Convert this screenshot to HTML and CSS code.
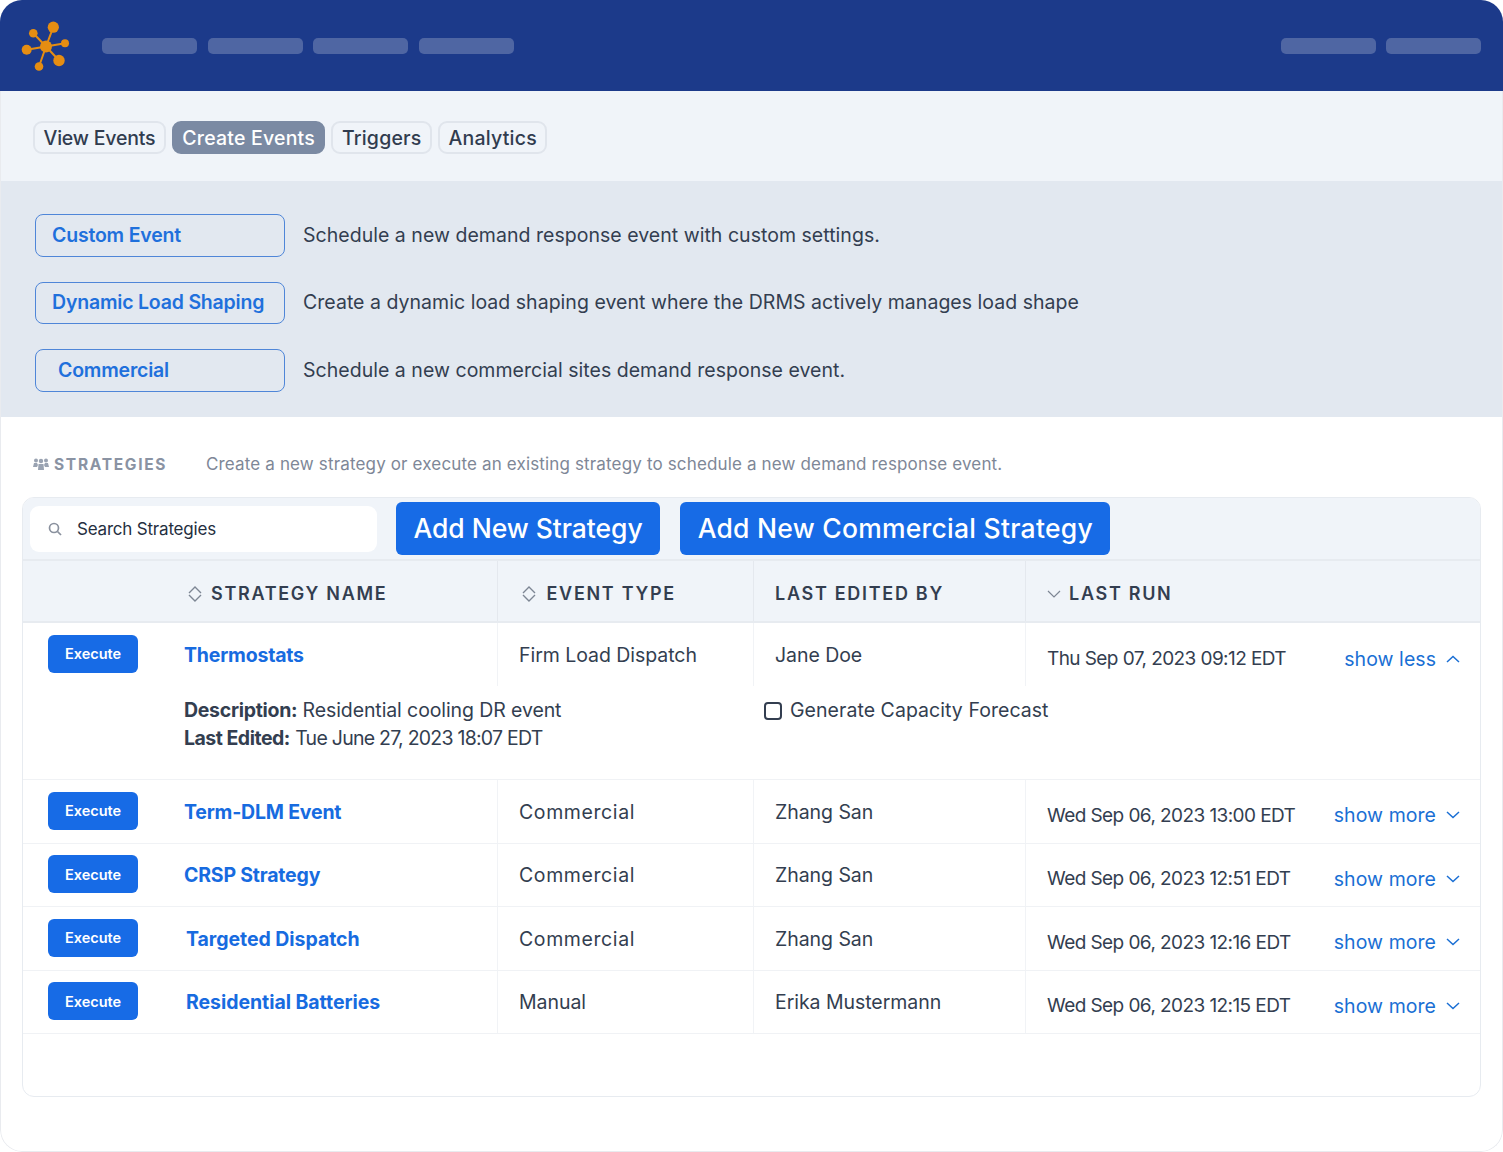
FILE: index.html
```html
<!DOCTYPE html>
<html lang="en">
<head>
<meta charset="utf-8">
<title>Create Events</title>
<link rel="stylesheet" href="styles.css">
</head>
<body>
<div class="app">
  <header class="topbar">
    <svg class="logo" width="50" height="50" viewBox="0 0 50 50" aria-hidden="true">
      <g fill="#e58d12">
        <path d="M25 25.500L32.300 6.200M25 25.500L12.300 12.200M25 25.500L44 22.200M25 25.500L38 39.500M25 25.500L18 45.500M25 25.500L5.700 28.800" fill="none" stroke="#e58d12" stroke-width="2"/>
        <circle cx="25" cy="25.500" r="6"/>
        <circle cx="32.300" cy="6.200" r="5.600"/>
        <circle cx="12.300" cy="12.200" r="4.300"/>
        <circle cx="44" cy="22.200" r="4"/>
        <circle cx="38" cy="39.500" r="5.700"/>
        <circle cx="18" cy="45.500" r="4.300"/>
        <circle cx="5.700" cy="28.800" r="5"/>
      </g>
    </svg>
    <div class="pills">
      <span class="pill"></span><span class="pill"></span><span class="pill"></span><span class="pill"></span>
    </div>
    <div class="pills pills-right">
      <span class="pill"></span><span class="pill"></span>
    </div>
  </header>

  <nav class="tabs">
    <a class="tab tab-tight">View Events</a>
    <a class="tab tab-active">Create Events</a>
    <a class="tab">Triggers</a>
    <a class="tab">Analytics</a>
  </nav>

  <section class="create">
    <div class="create-row"><button class="outline">Custom Event</button><p>Schedule a new demand response event with custom settings.</p></div>
    <div class="create-row"><button class="outline">Dynamic Load Shaping</button><p>Create a dynamic load shaping event where the DRMS actively manages load shape</p></div>
    <div class="create-row"><button class="outline outline-inset">Commercial</button><p>Schedule a new commercial sites demand response event.</p></div>
  </section>

  <section class="strategies">
    <div class="intro">
      <svg class="intro-icon" width="16" height="12" viewBox="0 0 16 12" aria-hidden="true"><g fill="#9aa3b2"><circle cx="3" cy="2.500" r="2"/><circle cx="13" cy="2.500" r="2"/><circle cx="8" cy="3" r="2.200"/><path d="M0 9l1-4h3l1 2-1 2zM16 9l-1-4h-3l-1 2 1 2zM5 12l.5-6h5l.5 6z"/></g></svg>
      <span class="intro-title">STRATEGIES</span>
      <span class="intro-text">Create a new strategy or execute an existing strategy to schedule a new demand response event.</span>
    </div>

    <div class="card">
      <div class="toolbar">
        <label class="search">
          <svg width="14" height="14" viewBox="0 0 14 14" fill="none" stroke="#8a919e" stroke-width="1.700" aria-hidden="true"><circle cx="6" cy="6" r="4.500"/><path d="M9.500 9.500L13 13"/></svg>
          <span>Search Strategies</span>
        </label>
        <button class="primary">Add New Strategy</button>
        <button class="primary primary-wide">Add New Commercial Strategy</button>
      </div>

      <div class="grid head">
        <div class="cell cell-name"><svg class="sort" width="16" height="18" viewBox="0 0 16 18" fill="none" stroke="#7d8694" stroke-width="1.400" aria-hidden="true"><path d="M2 8l6-6 6 6M2 10l6 6 6-6"/></svg>STRATEGY NAME</div>
        <div class="cell"><svg class="sort sort-wide" width="16" height="18" viewBox="0 0 16 18" fill="none" stroke="#7d8694" stroke-width="1.400" aria-hidden="true"><path d="M2 8l6-6 6 6M2 10l6 6 6-6"/></svg>EVENT TYPE</div>
        <div class="cell cell-plain">LAST EDITED BY</div>
        <div class="cell"><svg class="sort sort-narrow" width="14" height="10" viewBox="0 0 14 10" fill="none" stroke="#7d8694" stroke-width="1.200" aria-hidden="true"><path d="M1 2l6 6 6-6"/></svg>LAST RUN</div>
      </div>

      <div class="row row-open">
        <div class="grid body">
          <div class="cell cell-name"><button class="execute">Execute</button><a class="name">Thermostats</a></div>
          <div class="cell">Firm Load Dispatch</div>
          <div class="cell">Jane Doe</div>
          <div class="cell cell-run"><span class="run">Thu Sep 07, 2023 09:12 EDT</span><a class="toggle">show less<svg width="14" height="8" viewBox="0 0 14 8" fill="none" stroke="#1a6fd4" stroke-width="1.500" aria-hidden="true"><path d="M1 7L7 1.500 13 7"/></svg></a></div>
        </div>
        <div class="details">
          <div class="details-text"><b>Description:</b> Residential cooling DR event<br><b class="tight">Last Edited:</b> <span class="details-date">Tue June 27, 2023 18:07 EDT</span></div>
          <label class="check"><span class="box"></span>Generate Capacity Forecast</label>
        </div>
      </div>

      <div class="row">
        <div class="grid body">
          <div class="cell cell-name"><button class="execute">Execute</button><a class="name">Term-DLM Event</a></div>
          <div class="cell cell-wide">Commercial</div>
          <div class="cell">Zhang San</div>
          <div class="cell cell-run"><span class="run">Wed Sep 06, 2023 13:00 EDT</span><a class="toggle">show more<svg width="14" height="8" viewBox="0 0 14 8" fill="none" stroke="#1a6fd4" stroke-width="1.500" aria-hidden="true"><path d="M1 1L7 6.500 13 1"/></svg></a></div>
        </div>
      </div>
      <div class="row">
        <div class="grid body">
          <div class="cell cell-name"><button class="execute">Execute</button><a class="name">CRSP Strategy</a></div>
          <div class="cell cell-wide">Commercial</div>
          <div class="cell">Zhang San</div>
          <div class="cell cell-run"><span class="run">Wed Sep 06, 2023 12:51 EDT</span><a class="toggle">show more<svg width="14" height="8" viewBox="0 0 14 8" fill="none" stroke="#1a6fd4" stroke-width="1.500" aria-hidden="true"><path d="M1 1L7 6.500 13 1"/></svg></a></div>
        </div>
      </div>
      <div class="row">
        <div class="grid body">
          <div class="cell cell-name"><button class="execute">Execute</button><a class="name name-inset">Targeted Dispatch</a></div>
          <div class="cell cell-wide">Commercial</div>
          <div class="cell">Zhang San</div>
          <div class="cell cell-run"><span class="run">Wed Sep 06, 2023 12:16 EDT</span><a class="toggle">show more<svg width="14" height="8" viewBox="0 0 14 8" fill="none" stroke="#1a6fd4" stroke-width="1.500" aria-hidden="true"><path d="M1 1L7 6.500 13 1"/></svg></a></div>
        </div>
      </div>
      <div class="row">
        <div class="grid body">
          <div class="cell cell-name"><button class="execute">Execute</button><a class="name name-inset">Residential Batteries</a></div>
          <div class="cell">Manual</div>
          <div class="cell">Erika Mustermann</div>
          <div class="cell cell-run"><span class="run">Wed Sep 06, 2023 12:15 EDT</span><a class="toggle">show more<svg width="14" height="8" viewBox="0 0 14 8" fill="none" stroke="#1a6fd4" stroke-width="1.500" aria-hidden="true"><path d="M1 1L7 6.500 13 1"/></svg></a></div>
        </div>
      </div>
    </div>
  </section>
</div>
</body>
</html>
```
FILE: styles.css
```css
* { box-sizing: border-box; }
html, body { margin: 0; background: #fff; }
body { font-family: Inter, "Noto Sans", sans-serif; color: #2f3a4c; }
p { margin: 0; }
button { font-family: inherit; cursor: pointer; }

.app {
  position: relative;
  width: 1503px;
  height: 1152px;
  border-radius: 22px;
  overflow: hidden;
  background: #fff;
}
.app::after {
  content: "";
  position: absolute;
  inset: 91px 0 0;
  border: 1px solid #e9ebef;
  border-top: 0;
  border-radius: 0 0 22px 22px;
  pointer-events: none;
}

.topbar {
  height: 91px;
  background: #1c3a8a;
  display: flex;
  align-items: center;
  padding: 0 22px 0 21px;
}
.logo { margin-right: 31px; flex: none; }
.pills { display: flex; gap: 10.500px; }
.pills-right { margin-left: auto; }
.pill { width: 95px; height: 16px; border-radius: 5px; background: #4f66a3; }

.tabs {
  height: 90px;
  background: #f0f4f9;
  display: flex;
  align-items: center;
  gap: 6px;
  padding: 3px 33px 0;
}
.tab {
  height: 33px;
  padding: 0 8.500px;
  display: flex;
  align-items: center;
  border: 2px solid #e0e5ec;
  border-radius: 9px;
  font-size: 19.500px;
  font-weight: 500;
  letter-spacing: 0.2px;
  color: #303c4f;
}
.tab-tight { letter-spacing: -0.2px; }
.tab-active { background: #7b8aa3; border-color: #7b8aa3; color: #fff; }

.create {
  height: 236px;
  background: #e2e8f0;
  padding: 33px 35px 0;
  display: flex;
  flex-direction: column;
  gap: 25px;
}
.create-row { display: flex; align-items: center; gap: 18px; height: 42.500px; }
.create-row p { padding-bottom: 1px; font-size: 19.500px; letter-spacing: 0.03px; color: #333e50; }
.outline {
  width: 250px;
  height: 42.500px;
  padding: 0 0 1px 16px;
  text-align: left;
  background: transparent;
  border: 1.500px solid #4f86d8;
  border-radius: 8px;
  font-size: 19.500px;
  font-weight: 600;
  letter-spacing: -0.2px;
  color: #1f70dc;
}
.outline-inset { padding-left: 22px; }

.strategies { padding: 0 22px; }
.intro { display: flex; align-items: center; height: 80px; padding: 14px 0 0 11px; }
.intro-icon { margin-right: 5px; }
.intro-title { font-size: 15.500px; font-weight: 700; letter-spacing: 1.7px; color: #8a93a3; width: 152px; }
.intro-text { font-size: 17px; letter-spacing: 0.15px; color: #7e8797; }

.card {
  height: 600px;
  border: 1.500px solid #e7ebf0;
  border-radius: 12px;
  overflow: hidden;
}
.toolbar {
  height: 63px;
  background: #f0f4f9;
  border-bottom: 2px solid #e7ebf0;
  display: flex;
  align-items: center;
  padding: 0 7px;
}
.search {
  width: 347px;
  height: 46px;
  margin-right: 19px;
  padding-left: 18px;
  display: flex;
  align-items: center;
  gap: 15px;
  background: #fff;
  border-radius: 9px;
  font-size: 17px;
  letter-spacing: -0.2px;
  color: #252f3f;
}
.primary {
  height: 53px;
  margin-right: 20px;
  padding: 0 17.500px 2px;
  border: 0;
  border-radius: 6px;
  background: #176be6;
  color: #fff;
  font-size: 26.500px;
  font-weight: 500;
  letter-spacing: -0.05px;
}
.primary-wide { letter-spacing: 0.25px; }

.grid { display: grid; grid-template-columns: 474px 256px 272px 1fr; }
.cell { display: flex; align-items: center; padding-left: 21px; border-left: 1.500px solid #f1f3f6; }
.cell:first-child { border-left: 0; }

.head { height: 62px; background: #f0f4f9; border-bottom: 2px solid #e7ebf0; }
.head .cell {
  padding-top: 5px;
  font-size: 18px;
  font-weight: 600;
  letter-spacing: 1.7px;
  color: #333e50;
  border-left-color: #e4e8ee;
}
.head .cell-name { padding-left: 164px; }
.sort { margin-right: 8px; flex: none; }
.sort-wide { margin: 0 10px 0 1.500px; }
.sort-narrow { margin-right: 8px; }

.row { border-bottom: 1.500px solid #f0f2f5; }
.row .body { height: 62.500px; }
.row .body .cell { padding-top: 1px; }
.row-open { height: 157px; }
.row-open .body { height: 63px; }
.row-open .body .cell { padding-top: 0; }
.row .body .cell-run { padding-top: 8px; }
.body .cell { font-size: 19.500px; letter-spacing: -0.05px; color: #333e50; }
.body .cell-wide { letter-spacing: 0.6px; }
.body .cell-name { padding-left: 25px; }
.execute {
  width: 90px;
  height: 38px;
  margin: -2px 46px 0 0;
  padding: 0;
  border: 0;
  border-radius: 6px;
  background: #176be6;
  color: #fff;
  font-size: 14.500px;
  font-weight: 600;
}
.name { font-size: 19.500px; font-weight: 700; letter-spacing: -0.2px; color: #176be0; }
.name-inset { margin-left: 2px; letter-spacing: -0.05px; }
.cell-run { padding-right: 20px; justify-content: space-between; }
.run { font-size: 19px; letter-spacing: -0.58px; }
.toggle { display: flex; align-items: center; gap: 10px; letter-spacing: 0.05px; color: #1a6fd4; }

.details { display: flex; padding: 11px 0 0 161px; font-size: 19.500px; line-height: 27.500px; letter-spacing: -0.1px; color: #333e50; }
.details b { letter-spacing: -0.3px; }
.details .tight { letter-spacing: -0.5px; }
.details-text { width: 580px; }
.details-date { letter-spacing: -0.75px; }
.check { display: flex; align-items: center; gap: 8px; height: 27px; letter-spacing: 0.05px; }
.box { width: 18px; height: 18px; border: 2px solid #333e50; border-radius: 4px; }
```
